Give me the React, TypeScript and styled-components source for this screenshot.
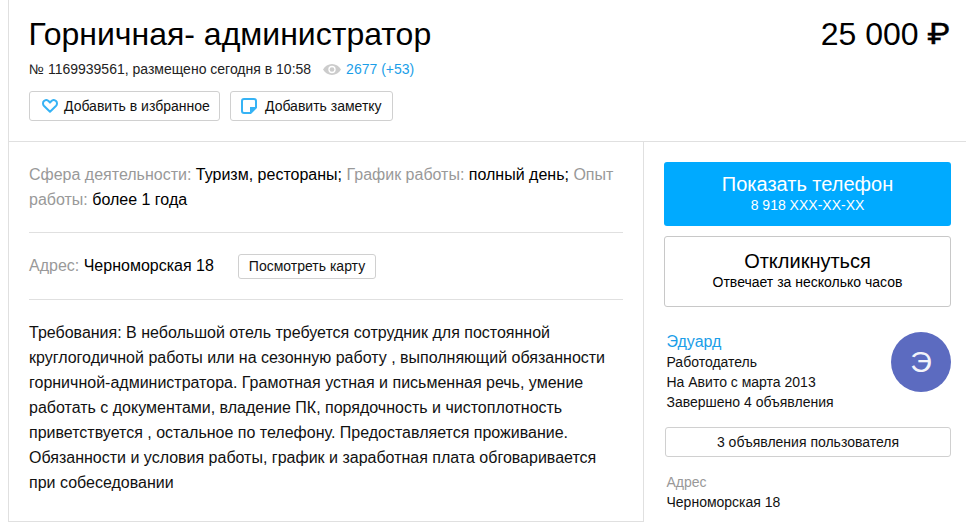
import React from "react";
import styled, { createGlobalStyle } from "styled-components";

const GlobalStyle = createGlobalStyle`
  html, body {
    margin: 0;
    padding: 0;
    background: #fff;
    overflow: hidden;
  }
  body {
    font-family: "Liberation Sans", Arial, sans-serif;
    color: #000;
  }
`;

const Page = styled.div`
  width: 958px;
  height: 522px;
  margin-left: 8px;
  box-sizing: border-box;
  border-left: 1px solid #e0e0e0;
  overflow: hidden;
`;

const Header = styled.header`
  height: 142px;
  box-sizing: border-box;
  border-bottom: 1px solid #e0e0e0;
  padding: 15px 16px 0 20px;
  display: flex;
  justify-content: space-between;
  align-items: flex-start;
`;

const Title = styled.h1`
  margin: 0 0 0 -0.5px;
  font-size: 32px;
  font-weight: 400;
  line-height: 38px;
`;

const Price = styled.div`
  display: flex;
  font-size: 32px;
  line-height: 38px;
`;

const Ruble = styled.span`
  display: inline-block;
  font-family: "Inter", sans-serif;
  font-size: 29px;
  margin-left: 11px;
  -webkit-text-stroke: 0.4px #000;
  transform: scaleX(1.16);
  transform-origin: 100% 50%;
`;

const MetaRow = styled.div`
  display: flex;
  align-items: center;
  height: 20px;
  margin-top: 6px;
  font-size: 14px;
  color: #222;
`;

const Views = styled.span`
  display: flex;
  align-items: center;
  margin-left: 12px;
  gap: 5px;
  color: #1b9ee8;
`;

const ActionRow = styled.div`
  display: flex;
  gap: 10px;
  margin-top: 12px;
`;

const ActionButton = styled.button<{ $width: number; $gap: number; $left: number }>`
  width: ${(p) => p.$width}px;
  height: 30px;
  box-sizing: border-box;
  display: flex;
  align-items: center;
  gap: ${(p) => p.$gap}px;
  padding: 0 0 0 ${(p) => p.$left}px;
  background: #fff;
  border: 1px solid #d0d0d0;
  border-radius: 3px;
  font: inherit;
  font-size: 14px;
  color: #111;
  white-space: nowrap;
`;

const Body = styled.div`
  display: flex;
  height: 380px;
`;

const Main = styled.main`
  width: 635px;
  height: 380px;
  box-sizing: border-box;
  flex: none;
  border-right: 1px solid #e0e0e0;
  border-bottom: 1px solid #e0e0e0;
  padding: 20px 20px 0;
`;

const Params = styled.p`
  margin: 0;
  padding-bottom: 20px;
  font-size: 16px;
  line-height: 25px;
  border-bottom: 1px solid #e0e0e0;
`;

const Label = styled.span`
  color: #999;
`;

const AddressRow = styled.div`
  height: 67px;
  box-sizing: border-box;
  display: flex;
  align-items: center;
  font-size: 16px;
  border-bottom: 1px solid #e0e0e0;
`;

const MapButton = styled.button`
  height: 25px;
  box-sizing: border-box;
  margin-left: 24px;
  padding: 0 10px;
  background: #fff;
  border: 1px solid #d0d0d0;
  border-radius: 3px;
  font: inherit;
  font-size: 14px;
  color: #111;
`;

const Description = styled.p`
  margin: 20px 0 0;
  font-size: 16px;
  line-height: 25px;
  color: #111;
`;

const Side = styled.aside`
  flex: 1;
  padding: 20px 15px 0 20px;
  display: flex;
  flex-direction: column;
`;

const PhoneButton = styled.button`
  height: 64px;
  border: 0;
  border-radius: 3px;
  background: #0af;
  color: #fff;
  font: inherit;
  font-size: 20px;
  line-height: 24px;
  padding: 0 0 3px;
`;

const ReplyButton = styled.button`
  height: 71px;
  margin-top: 10px;
  box-sizing: border-box;
  border: 1px solid #c8c8c8;
  border-radius: 3px;
  background: #fff;
  color: #000;
  font: inherit;
  font-size: 20px;
  line-height: 24px;
  padding: 0 0 3px;
`;

const ButtonHint = styled.span`
  display: block;
  margin-top: 1px;
  font-size: 14px;
  line-height: 17px;
`;

const Seller = styled.div`
  display: flex;
  justify-content: space-between;
  margin-top: 25px;
  padding-left: 2.5px;
`;

const SellerName = styled.div`
  font-size: 16px;
  line-height: 20px;
  color: #1b9ee8;
`;

const SellerLine = styled.div`
  font-size: 14px;
  line-height: 20px;
  color: #111;
`;

const Avatar = styled.div`
  width: 60px;
  height: 60px;
  border-radius: 50%;
  background: #5c6bc0;
  color: #f2f3fa;
  font-size: 30px;
  display: flex;
  align-items: center;
  justify-content: center;
`;

const ListingsButton = styled.button`
  height: 30px;
  margin: 15px 0 0 1px;
  box-sizing: border-box;
  border: 1px solid #d0d0d0;
  border-radius: 3px;
  background: #fff;
  font: inherit;
  font-size: 14px;
  color: #111;
  padding: 0;
`;

const SideAddress = styled.div`
  margin-top: 15px;
  padding-left: 2.5px;
`;

const SideLabel = styled.div`
  font-size: 14px;
  line-height: 20px;
  color: #999;
`;

const EyeIcon = () => (
  <svg width="18" height="11" viewBox="0 0 18 11">
    <path
      fill="#ccc"
      d="M9 0C5.2 0 1.9 2.2 0 5.5 1.9 8.8 5.2 11 9 11s7.1-2.2 9-5.5C16.1 2.2 12.8 0 9 0zm0 9.2a3.7 3.7 0 1 1 0-7.4 3.7 3.7 0 0 1 0 7.4z"
    />
    <circle cx="9" cy="5.5" r="2.3" fill="#ccc" />
  </svg>
);

const HeartIcon = () => (
  <svg width="16" height="14" viewBox="0 0 16 14">
    <path
      fill="none"
      stroke="#36b3f5"
      strokeWidth="2"
      strokeLinejoin="round"
      d="M8 12.7 2.1 7C.6 5.4.7 3.3 2 2.1 3.4.8 5.5 1 6.8 2.3L8 3.6l1.2-1.3C10.5 1 12.6.8 14 2.1c1.3 1.2 1.4 3.3-.1 4.9L8 12.7z"
    />
  </svg>
);

const NoteIcon = () => (
  <svg width="16" height="16" viewBox="0 0 16 16">
    <path
      fill="none"
      stroke="#36b3f5"
      strokeWidth="2"
      strokeLinejoin="round"
      d="M9.5 15H3a2 2 0 0 1-2-2V3a2 2 0 0 1 2-2h10a2 2 0 0 1 2 2v6.5L9.5 15z"
    />
    <path fill="#36b3f5" d="M9 9h6v.8L9.8 15H9z" />
  </svg>
);

export default function App() {
  return (
    <Page>
      <GlobalStyle />
      <Header>
        <div>
          <Title>Горничная- администратор</Title>
          <MetaRow>
            № 1169939561, размещено сегодня в 10:58
            <Views>
              <EyeIcon />
              2677 (+53)
            </Views>
          </MetaRow>
          <ActionRow>
            <ActionButton $width={191} $gap={6} $left={12}>
              <HeartIcon />
              Добавить в избранное
            </ActionButton>
            <ActionButton $width={163} $gap={8} $left={10}>
              <NoteIcon />
              Добавить заметку
            </ActionButton>
          </ActionRow>
        </div>
        <Price>
          25 000<Ruble>₽</Ruble>
        </Price>
      </Header>
      <Body>
        <Main>
          <Params>
            <Label>Сфера деятельности:</Label> Туризм, рестораны; <Label>График работы:</Label> полный день;{" "}
            <Label>Опыт работы:</Label> более 1 года
          </Params>
          <AddressRow>
            <Label>Адрес:</Label>&nbsp;Черноморская 18
            <MapButton>Посмотреть карту</MapButton>
          </AddressRow>
          <Description>
            Требования: В небольшой отель требуется сотрудник для постоянной круглогодичной работы или на сезонную
            работу , выполняющий обязанности горничной-администратора. Грамотная устная и письменная речь, умение
            работать с документами, владение ПК, порядочность и чистоплотность приветствуется , остальное по телефону.
            Предоставляется проживание. Обязанности и условия работы, график и заработная плата обговаривается при
            собеседовании
          </Description>
        </Main>
        <Side>
          <PhoneButton>
            Показать телефон
            <ButtonHint>8 918 XXX-XX-XX</ButtonHint>
          </PhoneButton>
          <ReplyButton>
            Откликнуться
            <ButtonHint>Отвечает за несколько часов</ButtonHint>
          </ReplyButton>
          <Seller>
            <div>
              <SellerName>Эдуард</SellerName>
              <SellerLine>Работодатель</SellerLine>
              <SellerLine>На Авито с марта 2013</SellerLine>
              <SellerLine>Завершено 4 объявления</SellerLine>
            </div>
            <Avatar>Э</Avatar>
          </Seller>
          <ListingsButton>3 объявления пользователя</ListingsButton>
          <SideAddress>
            <SideLabel>Адрес</SideLabel>
            <SellerLine>Черноморская 18</SellerLine>
          </SideAddress>
        </Side>
      </Body>
    </Page>
  );
}
